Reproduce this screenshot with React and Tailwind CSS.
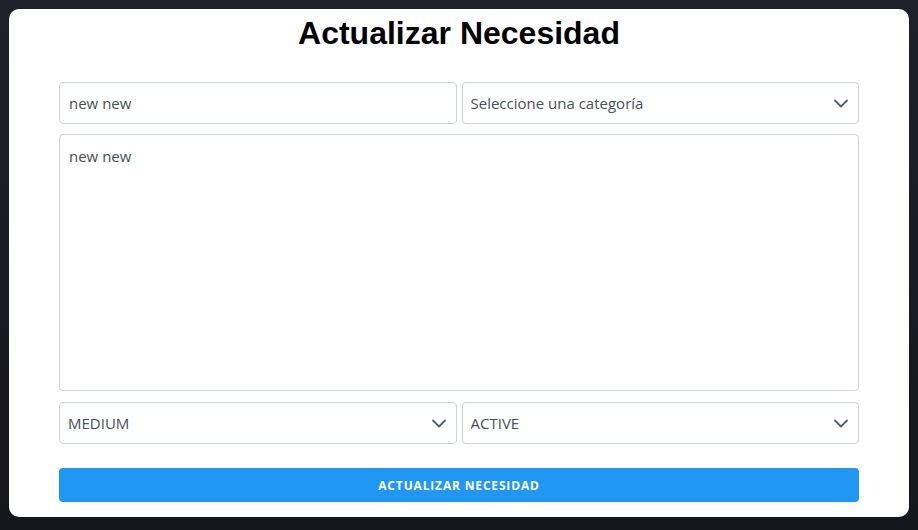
import React from 'react';

const Chevron = () => (
  <svg
    className="pointer-events-none absolute right-[10px] top-1/2 -translate-y-1/2"
    width="16"
    height="12"
    viewBox="0 0 16 12"
    fill="none"
  >
    <path d="M2 3.5l6 6 6-6" stroke="#4f5f72" strokeWidth="1.8" strokeLinecap="round" strokeLinejoin="round" />
  </svg>
);

const SelectBox = ({ value, options }) => (
  <div className="relative min-w-0">
    <select
      defaultValue={value}
      className="h-[42px] w-full appearance-none rounded-[4px] border border-[#ced4da] bg-white pl-[8px] pr-8 text-[15px] text-[#495057] outline-none"
    >
      {options.map((o) => (
        <option key={o} value={o}>{o}</option>
      ))}
    </select>
    <Chevron />
  </div>
);

const App = () => {
  return (
    <div
      className="min-h-[530px] bg-gradient-to-b from-[#1f2029] to-[#16171c] p-[9px]"
      style={{ fontFamily: '"Open Sans", "Noto Sans", sans-serif' }}
    >
      <div className="rounded-[10px] bg-white px-[50px] pt-[6px] pb-[15px]">
        <h1
          className="mb-[30px] text-center text-[32px] font-bold leading-[37px] text-black"
          style={{ fontFamily: '"Liberation Sans", Arial, sans-serif' }}
        >
          Actualizar Necesidad
        </h1>

        <div className="grid grid-cols-2 gap-[5px]">
          <input
            defaultValue="new new"
            className="h-[42px] w-full min-w-0 rounded-[4px] border border-[#ced4da] px-[9px] text-[15px] text-[#495057] outline-none"
          />
          <SelectBox value="Seleccione una categoría" options={['Seleccione una categoría']} />
        </div>

        <textarea
          defaultValue="new new"
          className="mt-[10px] block h-[257px] w-full resize-none rounded-[4px] border border-[#ced4da] px-[9px] py-[10px] text-[15px] text-[#495057] outline-none"
        />

        <div className="mt-[11px] grid grid-cols-2 gap-[5px]">
          <SelectBox value="MEDIUM" options={['LOW', 'MEDIUM', 'HIGH']} />
          <SelectBox value="ACTIVE" options={['ACTIVE', 'INACTIVE']} />
        </div>

        <button className="mt-[24px] h-[34px] w-full rounded-[4px] bg-[#2196f3] pt-[2px] text-[12px] font-bold tracking-[0.07em] text-white">
          ACTUALIZAR NECESIDAD
        </button>
      </div>
    </div>
  );
};

export default App;
